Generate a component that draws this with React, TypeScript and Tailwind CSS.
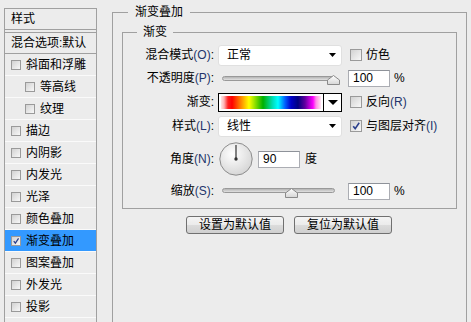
const FONT = "font-['Liberation_Sans','Noto_Sans_CJK_SC',sans-serif]";

const STYLES = [
  { label: '斜面和浮雕' },
  { label: '等高线', indent: true },
  { label: '纹理', indent: true },
  { label: '描边' },
  { label: '内阴影' },
  { label: '内发光' },
  { label: '光泽' },
  { label: '颜色叠加' },
  { label: '渐变叠加', checked: true, active: true },
  { label: '图案叠加' },
  { label: '外发光' },
  { label: '投影' },
];

function CheckBox({ small, checked }: { small?: boolean; checked?: boolean }) {
  return (
    <span
      className={`flex shrink-0 items-center justify-center border border-[#9a9a9a] bg-[linear-gradient(135deg,#d2d2d2,#f8f8f8)] ${
        small ? 'h-[10px] w-[10px]' : 'h-[12px] w-[12px]'
      }`}
    >
      {checked && (
        <svg viewBox="0 0 10 10" className="h-full w-full">
          <path d="M2.2 5.2 L4.2 7.6 L8.2 1.8" fill="none" stroke="#2b3f8c" strokeWidth="1.6" />
        </svg>
      )}
    </span>
  );
}

function Key({ k }: { k: string }) {
  return <span className="text-[#23356b]">({k})</span>;
}

function Label({ children }: { children: React.ReactNode }) {
  return <div className="w-[91px] shrink-0 text-right">{children}</div>;
}

function Select({ value }: { value: string }) {
  return (
    <div className="flex h-[21px] w-[124px] items-center justify-between rounded-[3px] border border-[#e0e0e0] bg-white pl-[8px] pr-[5px]">
      <span>{value}</span>
      <svg width="7" height="4" viewBox="0 0 7 4">
        <path d="M0 0 H7 L3.5 4 Z" fill="#000" />
      </svg>
    </div>
  );
}

function Field({ value, w = 'w-[42px]' }: { value: string; w?: string }) {
  return (
    <div className={`flex h-[17px] items-center border border-[#abadb3] border-t-[#8e9299] bg-white pl-[4px] text-[12px] ${w}`}>
      {value}
    </div>
  );
}

function Thumb() {
  return (
    <svg width="13" height="10" viewBox="0 0 13 10">
      <defs>
        <linearGradient id="tg" x1="0" y1="0" x2="0" y2="1">
          <stop offset="0" stopColor="#ffffff" />
          <stop offset="1" stopColor="#d6d6d6" />
        </linearGradient>
      </defs>
      <path d="M6.5 0.5 L12.5 5 V9.5 H0.5 V5 Z" fill="url(#tg)" stroke="#8a8a8a" />
    </svg>
  );
}

function Slider({ thumb, top }: { thumb: string; top: string }) {
  return (
    <div className="relative h-full w-[124px]">
      <div className={`absolute left-[4px] h-[5px] w-[113px] rounded-full border border-[#999] bg-[linear-gradient(#b4b4b4,#e2e2e2)] ${top}`} />
      <div className={`absolute ${thumb}`}>
        <Thumb />
      </div>
    </div>
  );
}

function Dial() {
  return (
    <svg width="34" height="34" viewBox="0 0 34 34">
      <defs>
        <radialGradient id="dg" cx="0.4" cy="0.35" r="0.7">
          <stop offset="0" stopColor="#ffffff" />
          <stop offset="1" stopColor="#d4d4d4" />
        </radialGradient>
      </defs>
      <circle cx="17" cy="17" r="16.2" fill="url(#dg)" stroke="#8c8c8c" />
      <line x1="17" y1="17" x2="17" y2="3" stroke="#333" strokeWidth="1.2" />
      <circle cx="17" cy="17" r="1.7" fill="#333" />
    </svg>
  );
}

function GradientPicker() {
  return (
    <div className="flex h-[19px] w-[124px] border border-black bg-white">
      <div className="m-[2px] flex-1 bg-[linear-gradient(to_right,#ffe6e6_0%,#ffb4b4_3%,#ff2020_7%,#ff0000_11%,#ff7a00_19%,#ffff00_28%,#90e000_34%,#00b000_42%,#00e0c0_52%,#00ffff_57%,#0060ff_64%,#0000c8_70%,#000080_77%,#6000a0_84%,#ff00ff_92%,#ff8ce6_95%,#ffe6f2_100%)]" />
      <div className="flex w-[18px] items-center justify-center border-l border-black">
        <svg width="10" height="5" viewBox="0 0 10 5">
          <path d="M0 0 H10 L5 5 Z" fill="#000" />
        </svg>
      </div>
    </div>
  );
}

function Button({ children }: { children: React.ReactNode }) {
  return (
    <div className="flex h-[18px] w-[98px] items-center justify-center rounded-[3px] border border-[#707070] bg-[linear-gradient(#f4f4f4_0%,#ebebeb_50%,#dcdcdc_51%,#cfcfcf_100%)]">
      {children}
    </div>
  );
}

function StyleList() {
  return (
    <div className="ml-[4px] mt-[8px] h-[330px] w-[93px] shrink-0 border border-[#a0a0a0]">
      <div className="flex h-[21px] items-center border-b border-[#a0a0a0] pl-[6px]">样式</div>
      <div className="h-[2px]" />
      <div className="flex h-[22px] items-center border-y border-[#a0a0a0] pl-[6px]">混合选项:默认</div>
      {STYLES.map((s) => (
        <div
          key={s.label}
          className={`flex h-[22px] items-center border-b border-[#fafafa] ${s.indent ? 'pl-[20px]' : 'pl-[6px]'} ${
            s.active ? 'bg-[#3399ff]' : ''
          }`}
        >
          <CheckBox small checked={s.checked} />
          <span className="ml-[5px]">{s.label}</span>
        </div>
      ))}
    </div>
  );
}

export default function App() {
  return (
    <div className={`flex h-[322px] w-[471px] overflow-hidden bg-[#ececec] text-[12px] leading-[16px] text-black ${FONT}`}>
      <StyleList />

      <fieldset className="ml-[15px] mt-[4px] h-[340px] w-[355px] shrink-0 border border-[#a0a0a0]">
        <legend className="ml-[15px] px-[7px] leading-[16px]">渐变叠加</legend>

        <fieldset className="ml-[9px] mt-[4px] w-[335px] border border-[#a0a0a0] pb-[6px] pt-[4px]">
          <legend className="ml-[14px] px-[6px] leading-[16px]">渐变</legend>

          {/* 混合模式 */}
          <div className="flex h-[22px] items-center">
            <Label>
              混合模式<Key k="O" />:
            </Label>
            <div className="ml-[4px]">
              <Select value="正常" />
            </div>
            <div className="ml-[8px] flex items-center">
              <CheckBox />
              <span className="ml-[4px]">仿色</span>
            </div>
          </div>

          {/* 不透明度 */}
          <div className="flex h-[24px] items-center">
            <Label>
              不透明度<Key k="P" />:
            </Label>
            <div className="ml-[4px] h-full">
              <Slider thumb="left-[109px] top-[9px]" top="top-[10px]" />
            </div>
            <div className="ml-[6px] flex items-center">
              <Field value="100" />
              <span className="ml-[4px]">%</span>
            </div>
          </div>

          {/* 渐变 */}
          <div className="flex h-[24px] items-center">
            <Label>渐变:</Label>
            <div className="ml-[4px]">
              <GradientPicker />
            </div>
            <div className="ml-[8px] flex items-center">
              <CheckBox />
              <span className="ml-[4px]">
                反向<Key k="R" />
              </span>
            </div>
          </div>

          {/* 样式 */}
          <div className="flex h-[24px] items-center">
            <Label>
              样式<Key k="L" />:
            </Label>
            <div className="ml-[4px]">
              <Select value="线性" />
            </div>
            <div className="ml-[8px] flex items-center">
              <CheckBox checked />
              <span className="ml-[4px]">
                与图层对齐<Key k="I" />
              </span>
            </div>
          </div>

          {/* 角度 */}
          <div className="flex h-[42px] items-center">
            <Label>
              角度<Key k="N" />:
            </Label>
            <div className="ml-[5px] flex items-center">
              <Dial />
              <div className="ml-[5px]">
                <Field value="90" />
              </div>
              <span className="ml-[5px]">度</span>
            </div>
          </div>

          {/* 缩放 */}
          <div className="flex h-[22px] items-center">
            <Label>
              缩放<Key k="S" />:
            </Label>
            <div className="ml-[4px] h-full">
              <Slider thumb="left-[67px] top-[8px]" top="top-[8px]" />
            </div>
            <div className="ml-[6px] flex items-center">
              <Field value="100" />
              <span className="ml-[4px]">%</span>
            </div>
          </div>
        </fieldset>

        <div className="ml-[73px] mt-[7px] flex gap-[10px]">
          <Button>设置为默认值</Button>
          <Button>复位为默认值</Button>
        </div>
      </fieldset>
    </div>
  );
}
